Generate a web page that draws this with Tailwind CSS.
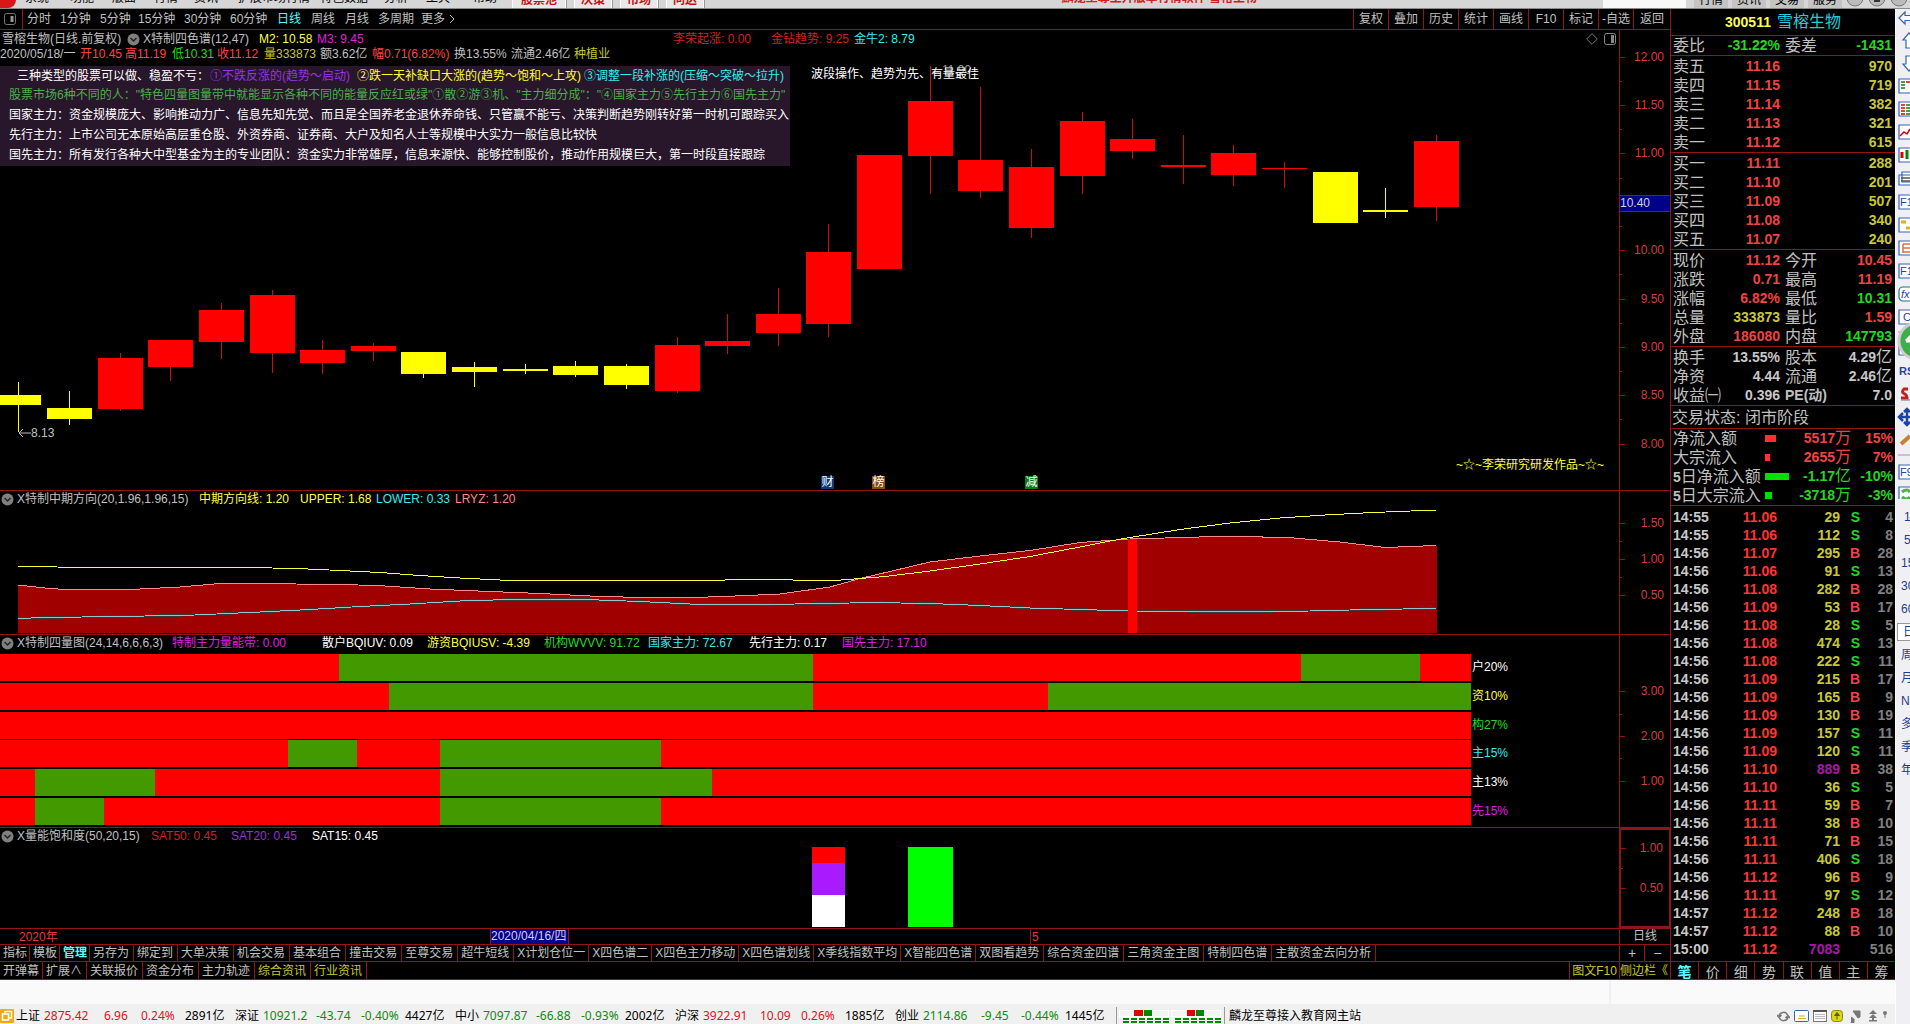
<!DOCTYPE html>
<html lang="zh-CN">
<head>
<meta charset="utf-8">
<title>雪榕生物 300511</title>
<script src="https://cdn.jsdelivr.net/npm/@tailwindcss/browser@4"></script>
</head>
<body class="flex min-h-screen flex-col overflow-x-hidden bg-[#f0f0f0] font-['Liberation_Sans','Noto_Sans_CJK_SC',sans-serif] text-xs leading-4 text-[#c0c0c0]">

<!-- window title strip -->
<header class="relative flex h-[9px] items-end overflow-hidden border-b border-[#8a8a8a] bg-[#d6d6d6] text-black">
  <span class="h-2 w-4 shrink-0 rounded-br-lg bg-[#d81818]"></span>
  <nav class="flex h-4 shrink-0 items-start leading-[13px]">
    <a href="#" class="ml-[9px] w-[45px]">系统</a><a href="#" class="w-[42px]">功能</a><a href="#" class="w-[42px]">版面</a><a href="#" class="w-[40px]">行情</a><a href="#" class="w-[44px]">资讯</a><a href="#" class="w-[82px]">扩展市场行情</a><a href="#" class="w-[64px]">特色数据</a><a href="#" class="w-[42px]">分析</a><a href="#" class="w-[47px]">工具</a><a href="#" class="w-[39px]">帮助</a>
  </nav>
  <div class="flex h-4 shrink-0 gap-2 font-bold leading-[13px] text-[#c81010]">
    <button class="w-[54px] border-x border-white bg-[#e8e8e8] shadow-[1px_0_0_#999]">股票池</button>
    <button class="w-[38px] border-x border-white bg-[#e8e8e8] shadow-[1px_0_0_#999]">决策</button>
    <button class="w-[38px] border-x border-white bg-[#e8e8e8] shadow-[1px_0_0_#999]">市场</button>
    <button class="w-[38px] border-x border-white bg-[#e8e8e8] shadow-[1px_0_0_#999]">问达</button>
  </div>
  <p class="ml-auto h-4 font-bold leading-[13px] text-[#d02020]">麟龙至尊主升版本行情软件 雪榕生物</p>
  <span class="ml-[346px] h-2 w-[83px] shrink-0 bg-[#f8f8f8]"></span>
  <div class="ml-2 flex h-4 shrink-0 gap-1 leading-[13px]">
    <button class="w-[34px] bg-[#c4c4c4]">行情</button><button class="w-[34px] bg-[#c4c4c4]">资讯</button><button class="w-[34px] bg-[#c4c4c4]">交易</button><button class="w-[34px] bg-[#c4c4c4]">服务</button>
  </div>
  <svg class="ml-1 h-2 w-[64px] shrink-0" viewBox="0 0 64 8" fill="#bbb" stroke="#777"><circle cx="9" cy="-2" r="8"/><circle cx="31" cy="-2" r="8"/><circle cx="53" cy="-2" r="8"/><path d="M28 1h6" stroke="#333" stroke-width="2"/></svg>
</header>

<div class="flex flex-1">
<div class="flex min-w-0 flex-1 flex-col">
<main class="flex bg-black">

<!-- chart column -->
<section class="min-w-0 flex-1">
  <!-- period toolbar -->
  <div class="flex h-[21px] items-center border-b border-[#931414] whitespace-nowrap">
    <svg class="ml-1 h-3 w-3" viewBox="0 0 12 12" fill="none" stroke="#777"><rect x=".5" y=".5" width="11" height="11" rx="2"/><path d="M8 3v6" stroke="#999" stroke-width="3"/></svg>
    <div class="ml-[6px] h-5 border-l border-[#931414]"></div>
    <nav class="ml-1 flex">
      <button class="w-[33px] text-left">分时</button><button class="w-10 text-left">1分钟</button><button class="w-[38px] text-left">5分钟</button><button class="w-[46px] text-left">15分钟</button><button class="w-[46px] text-left">30分钟</button><button class="w-[47px] text-left">60分钟</button><button class="w-[34px] text-left text-[#5ff]">日线</button><button class="w-[34px] text-left">周线</button><button class="w-[33px] text-left">月线</button><button class="w-[43px] text-left">多周期</button><button class="flex items-center gap-1">更多<svg class="h-2 w-[6px]" viewBox="0 0 6 8" fill="none" stroke="#c0c0c0"><path d="M1 0l4 4-4 4"/></svg></button>
    </nav>
    <div id="tools" class="ml-auto flex h-5"></div>
  </div>

  <!-- candlestick chart -->
  <div class="flex h-[461px] border-b border-[#931414]">
    <div class="relative min-w-0 flex-1 overflow-hidden">
      <svg id="candles" class="absolute inset-0 h-full w-full" viewBox="0 0 1619 460" preserveAspectRatio="none" shape-rendering="crispEdges"></svg>
      <div class="relative whitespace-nowrap">
        <div class="flex h-[18px] items-center pl-[2px]">
          <span class="w-[125px]">雪榕生物(日线.前复权)</span>
          <svg class="mr-[3px] h-[13px] w-[13px]" viewBox="0 0 13 13"><circle cx="6.500" cy="6.500" r="6" fill="#808080"/><path d="M3.500 5l3 3 3-3" fill="none" stroke="#222" stroke-width="1.500"/></svg>
          <span class="w-[116px]">X特制四色谱(12,47)</span>
          <span class="w-[58px] text-[#ff4]">M2: 10.58</span><span class="w-[356px] text-[#e020e0]">M3: 9.45</span>
          <span class="w-[98px] text-[#d02020]">李荣起涨: 0.00</span><span class="w-[83px] text-[#d02020]">金钻趋势: 9.25</span><span class="text-[#3ee]">金牛2: 8.79</span>
          <svg class="ml-auto mr-[6px] h-3 w-3" viewBox="0 0 12 12" fill="none" stroke="#777"><path d="M6 .7L11.300 6 6 11.300.7 6z"/></svg>
          <svg class="mr-[3px] h-3 w-3" viewBox="0 0 12 12" fill="none" stroke="#888"><rect x=".5" y=".5" width="11" height="11" rx="2"/><path d="M8.500 2v8" stroke-width="3"/></svg>
        </div>
        <div class="flex h-3 items-center leading-3">
          <span class="w-20">2020/05/18/一</span><span class="w-[45px] text-[#f44]">开10.45</span><span class="w-[47px] text-[#f44]">高11.19</span><span class="w-[45px] text-[#2d2]">低10.31</span><span class="w-[47px] text-[#f44]">收11.12</span><span class="w-14 text-[#c8c832]">量333873</span><span class="w-[52px]">额3.62亿</span><span class="w-[82px] text-[#f44]">幅0.71(6.82%)</span><span class="w-[57px]">换13.55%</span><span class="w-[63px]">流通2.46亿</span><span class="text-[#c8c832]">种植业</span>
        </div>
      </div>
      <div class="absolute left-0 top-9 flex h-[100px] w-[790px] flex-col bg-[#28162a] pl-[9px] leading-[20px] whitespace-nowrap text-white">
        <p class="flex h-[19px] items-center pl-2"><span class="w-[193px]">三种类型的股票可以做、稳盈不亏：</span><span class="w-[147px] text-[#9a32e8]">①不跌反涨的(趋势～启动)</span><span class="w-[227px] text-[#ff3]">②跌一天补缺口大涨的(趋势～饱和～上攻)</span><span class="text-[#3ee]">③调整一段补涨的(压缩～突破～拉升)</span></p>
        <p class="text-[#4cb04c]">股票市场6种不同的人："特色四量图量带中就能显示各种不同的能量反应红或绿"①散②游③机、"主力细分成"："④国家主力⑤先行主力⑥国先主力"</p>
        <p>国家主力：资金规模庞大、影响推动力广、信息先知先觉、而且是全国养老金退休养命钱、只管赢不能亏、决策判断趋势刚转好第一时机可跟踪买入</p>
        <p>先行主力：上市公司无本原始高层重仓股、外资券商、证券商、大户及知名人士等规模中大实力一般信息比较快</p>
        <p>国先主力：所有发行各种大中型基金为主的专业团队：资金实力非常雄厚，信息来源快、能够控制股价，推动作用规模巨大，第一时段直接跟踪</p>
      </div>
      <span class="absolute left-[930px] top-8 text-[#999]">←11.90</span>
      <span class="absolute left-[811px] top-9 whitespace-nowrap text-white">波段操作、趋势为先、有量最佳</span>
      <span class="absolute left-[19px] top-[395px] flex items-center"><svg class="h-2 w-3" viewBox="0 0 12 8" fill="none" stroke="#c0c0c0"><path d="M12 4H0M4 0L0 4l4 4"/></svg>8.13</span>
      <span class="absolute left-[821px] top-[446px] h-[13px] w-[13px] bg-[#0a3a78] text-center leading-[13px] text-white">财</span>
      <span class="absolute left-[872px] top-[446px] h-[13px] w-[13px] bg-[#8a4a10] text-center leading-[13px] text-white">榜</span>
      <span class="absolute left-[1025px] top-[446px] h-[13px] w-[13px] bg-[#0a7a14] text-center leading-[13px] text-white">减</span>
      <span class="absolute right-[15px] top-[427px] whitespace-nowrap text-[#ff3]">~☆~李荣研究研发作品~☆~</span>
    </div>
    <div class="relative w-[51px] border-l border-[#931414]" data-axis="27:12.00,75:11.50,123:11.00,172:,220:10.00,269:9.50,317:9.00,365:8.50,414:8.00" data-minor="51,99,148,196,244,293,341,389">
      <span class="absolute inset-x-0 top-[165px] z-10 h-[17px] border-y border-[#931414] bg-[#000088] leading-[15px] text-[#d0d0e8]">10.40</span>
    </div>
  </div>

  <!-- mid-term direction -->
  <div class="flex h-[144px] border-b border-[#931414]">
    <div class="relative min-w-0 flex-1 overflow-hidden">
      <svg class="absolute inset-0 h-full w-full" viewBox="0 0 1619 143" preserveAspectRatio="none" fill="none" shape-rendering="crispEdges">
        <path fill="#a00000" d="M18 142V94L45 97 65 98.500H130L180 96 220 92.500H247L345 93.500 385 95 430 98 490 100.500 540 102.500 590 105 640 106.500 700 106.300 740 104.800 780 103 830 96 860 87.500 890 80.500 930 71 980 65 1030 59.500 1080 51.500 1130 48 1210 45.700H1250L1290 46.700 1340 51 1385 56.500 1437 54.500V142z"/>
        <path stroke="#f88" d="M18 94L45 97 65 98.500H130L180 96 220 92.500H247L345 93.500 385 95 430 98 490 100.500 540 102.500 590 105 640 106.500 700 106.300 740 104.800 780 103 830 96 860 87.500 890 80.500 930 71 980 65 1030 59.500 1080 51.500 1130 48 1210 45.700H1250L1290 46.700 1340 51 1385 56.500 1436 54.500"/>
        <path stroke="#303c3c" stroke-width="2.500" d="M18 127.500L45 126.500 120 125.500 195 124 260 121 310 118.500 360 115.500 410 113 460 110 510 108.500H585L640 110.500 700 113.500H760L830 112.500 870 111.500 930 112.500 980 114.500 1030 117 1080 118.500 1130 120 1240 120.500 1310 120 1370 118.500 1436 117.500"/>
        <path stroke="#8cc8cc" d="M18 127.500L45 126.500 120 125.500 195 124 260 121 310 118.500 360 115.500 410 113 460 110 510 108.500H585L640 110.500 700 113.500H760L830 112.500 870 111.500 930 112.500 980 114.500 1030 117 1080 118.500 1130 120 1240 120.500 1310 120 1370 118.500 1436 117.500"/>
        <path stroke="#ff4" d="M18 75.500L95 76.500H247L297 77.500 340 79.500 380 81.500 420 84.500 460 87 510 89.500H700L750 88.500 835 89.500 860 87.500 885 85.500 930 80 980 73 1030 65.500 1080 56 1110 50 1130 46.500 1180 38.500 1230 32 1280 27 1325 24 1373 21.500 1436 19"/>
        <path fill="#f00" d="M1128 48h9v94h-9z"/>
      </svg>
      <div class="relative flex h-4 items-center whitespace-nowrap">
        <svg class="mx-[1px] mr-[3px] h-[13px] w-[13px]" viewBox="0 0 13 13"><circle cx="6.500" cy="6.500" r="6" fill="#808080"/><path d="M3.500 5l3 3 3-3" fill="none" stroke="#222" stroke-width="1.500"/></svg>
        <span class="w-[182px]">X特制中期方向(20,1.96,1.96,15)</span><span class="w-[101px] text-[#ff4]">中期方向线: 1.20</span><span class="w-[76px] text-[#ff4]">UPPER: 1.68</span><span class="w-[79px] text-[#3ee]">LOWER: 0.33</span><span class="text-[#f88]">LRYZ: 1.20</span>
      </div>
    </div>
    <div class="relative w-[51px] border-l border-[#931414]" data-axis="32:1.50,68:1.00,104:0.50" data-minor="50,86"></div>
  </div>

  <!-- four-volume bands -->
  <div class="flex h-[193px] border-b border-[#931414]">
    <div class="min-w-0 flex-1 overflow-hidden">
      <div class="flex h-[19px] items-start whitespace-nowrap">
        <svg class="mx-[1px] mr-[3px] mt-[2px] h-[13px] w-[13px]" viewBox="0 0 13 13"><circle cx="6.500" cy="6.500" r="6" fill="#808080"/><path d="M3.500 5l3 3 3-3" fill="none" stroke="#222" stroke-width="1.500"/></svg>
        <span class="w-[155px]">X特制四量图(24,14,6,6,6,3)</span><span class="w-[150px] text-[#e020e0]">特制主力量能带: 0.00</span><span class="w-[105px] text-white">散户BQIUV: 0.09</span><span class="w-[117px] text-[#ff4]">游资BQIUSV: -4.39</span><span class="w-[104px] text-[#2d2]">机构WVVV: 91.72</span><span class="w-[101px] text-[#3ee]">国家主力: 72.67</span><span class="w-[93px] text-white">先行主力: 0.17</span><span class="text-[#e020e0]">国先主力: 17.10</span>
      </div>
      <div id="bands" class="flex h-[171px] flex-col justify-between"></div>
    </div>
    <div class="relative w-[51px] border-l border-[#931414]" data-axis="56:3.00,101:2.00,146:1.00" data-minor="79,123"></div>
  </div>

  <!-- saturation -->
  <div class="flex h-[101px] border-b border-[#931414]">
    <div class="relative min-w-0 flex-1 overflow-hidden">
      <svg class="absolute inset-0 h-full w-full" viewBox="0 0 1619 100" preserveAspectRatio="none"><path fill="#f00" d="M812 19h33v17h-33z"/><path fill="#aa1aff" d="M812 35h33v32h-33z"/><path fill="#fff" d="M812 67h33v32h-33z"/><path fill="#0f0" d="M908 19h45v80h-45z"/></svg>
      <div class="relative flex h-4 items-center whitespace-nowrap">
        <svg class="mx-[1px] mr-[3px] h-[13px] w-[13px]" viewBox="0 0 13 13"><circle cx="6.500" cy="6.500" r="6" fill="#808080"/><path d="M3.500 5l3 3 3-3" fill="none" stroke="#222" stroke-width="1.500"/></svg>
        <span class="w-[134px]">X量能饱和度(50,20,15)</span><span class="w-20 text-[#d02020]">SAT50: 0.45</span><span class="w-[81px] text-[#9a32d8]">SAT20: 0.45</span><span class="text-white">SAT15: 0.45</span>
      </div>
    </div>
    <div class="relative w-[51px] border-2 border-r border-[#931414]" data-axis="18:1.00,58:0.50" data-minor="38"></div>
  </div>

  <!-- time axis -->
  <div class="flex h-4 border-b border-[#931414]">
    <div class="relative flex-1 text-[#e03c3c]">
      <span class="absolute left-[19px] top-0">2020年</span>
      <span class="absolute left-[490px] top-0 h-[15px] w-[79px] border-x border-[#931414] bg-[#000088] leading-[15px] whitespace-nowrap text-[#d0d0e8]">2020/04/16/四</span>
      <span class="absolute left-[1030px] top-0 h-[15px] border-l border-[#931414] pl-px">5</span>
    </div>
    <button class="w-[51px] border-l border-[#931414] leading-[15px]">日线</button>
  </div>
  <!-- indicator tabs -->
  <div class="flex h-[17px] border-b border-[#931414] whitespace-nowrap">
    <div id="tabs1" class="flex min-w-0 flex-1 overflow-hidden"></div>
    <div class="flex w-[51px] border-l border-[#931414]"><button class="w-[25px] border-r border-[#931414] text-sm leading-4">+</button><button class="flex-1 text-sm leading-4">−</button></div>
  </div>
  <div class="flex h-[18px] border-b border-[#931414] whitespace-nowrap">
    <div id="tabs2" class="flex flex-1"></div>
    <button class="w-[50px] border-l border-[#931414] text-[#c8c832]">图文F10</button>
    <button class="w-[51px] border-l border-[#931414] text-left text-[#c8c832]">侧边栏《</button>
  </div>
</section>

<!-- quote panel -->
<aside class="flex w-[225px] shrink-0 flex-col border-l border-[#931414] text-sm">
  <h1 class="flex h-[27px] items-center justify-center gap-[6px] border-b border-[#931414] font-bold text-[#ff4]">300511 <span class="text-base font-normal text-[#2cd]">雪榕生物</span></h1>
  <div id="quotes"></div>
  <div id="ticks" class="flex-1 pt-[2px]"></div>
  <div id="qtabs" class="flex h-[19px] border-y border-[#931414]"></div>
</aside>
</main>

<div class="flex h-6 bg-[#fafafa]"><span class="flex-1"></span><span class="w-[286px] border-l-2 border-[#f0f0f0]"></span></div>

<!-- index status bar -->
<footer class="flex h-5 items-center overflow-hidden bg-[#f0f0f0] pt-1 font-['Noto_Sans','Noto_Sans_CJK_SC',sans-serif] whitespace-nowrap text-black">
  <svg class="mr-[2px] h-[14px] w-[14px] shrink-0" viewBox="0 0 14 14"><rect width="14" height="14" rx="1" fill="#f0a818"/><g fill="none" stroke="#fff" stroke-width="1.500"><rect x="2.500" y="5" width="6" height="6"/><path d="M5 4.500V2.500h6.500V9H9"/></g></svg>
  <div id="indices" class="flex shrink-0"></div>
  <svg class="h-[18px] w-[110px] shrink-0" viewBox="0 0 110 18" shape-rendering="crispEdges"><path d="M1.500 0v18M109.500 0v18" stroke="#999"/><g fill="#f4f4f4" stroke="#fff"><path d="M4.500 3.500h49v6h-49zM56.500 3.500h49v6h-49z"/></g><path fill="#e00000" d="M19 3h9v6h-9zM72 3h8v6h-8z"/><path fill="#080" d="M29 3h8v6h-8zM81 3h8v6h-8z"/><path stroke="#080" stroke-width="2" stroke-dasharray="6 2" d="M8 12h46M8 15h46M60 12h46M60 15h46"/></svg>
  <span class="ml-1">麟龙至尊接入教育网主站</span>
  <div class="ml-auto mr-[6px] flex items-center gap-1">
    <svg class="h-[13px] w-[13px]" viewBox="0 0 13 13" fill="none" stroke="#777" stroke-width="1.500"><path d="M2 6a4.500 4.500 0 0 1 8.500-1M11 7a4.500 4.500 0 0 1-8.500 1M0 5l2 2.500L4.500 5M8.500 8L11 5.500 13 8"/></svg>
    <svg class="h-3 w-[15px]" viewBox="0 0 15 12"><rect x=".5" y=".5" width="14" height="11" rx="1" fill="#fff" stroke="#3a62a8"/><path d="M5 6h6M4 8.500h8" stroke="#d8b020"/></svg>
    <svg class="h-3 w-[14px]" viewBox="0 0 14 12"><rect x=".5" y=".5" width="13" height="11" fill="#fafafa" stroke="#777"/><path d="M0 1h14" stroke="#555" stroke-width="2"/><path d="M2 4.500h10M2 6.500h10M2 8.500h10" stroke="#bbb"/></svg>
    <svg class="h-3 w-3" viewBox="0 0 12 12"><rect x=".5" y=".5" width="11" height="11" rx="3" fill="#d8d818" stroke="#888810"/><path d="M6 2.500L3.500 5.500h5zM6 5v4.500" stroke="#665c00" fill="#665c00"/></svg>
    <svg class="ml-[3px] h-[13px] w-3" viewBox="0 0 12 13" fill="#777" stroke="#777"><path d="M3 1l7 0 0 6-2 1zM4 9L1 12.500M1 7l3 2v3.500H1"/></svg>
    <svg class="ml-[3px] h-3 w-2" viewBox="0 0 8 12" fill="#777"><path d="M4 0l4 4H0zM4 4l4 4H0zM3 7h2v3H3zM0 10h8v1.500H0z"/></svg>
    <svg class="h-3 w-2" viewBox="0 0 8 12" fill="#777"><circle cx="4" cy="3" r="2"/><path d="M3.500 3h1v5h-1z"/></svg>
  </div>
</footer>
</div>

<!-- clipped tool rail -->
<nav class="relative w-[15px] shrink-0 overflow-hidden border-l border-white bg-[#f0f0f4]">
  <svg class="absolute left-0 top-0 h-[490px] w-[30px]" viewBox="1 9 30 490" fill="none" stroke="#3464b4" stroke-width="1.200">
    <path fill="#fff" d="M4 18l6-6v3.500h8v5h-8V24zM8 40l6-7 6 7h-3v8h-6v-8zM8 64l6 7 6-7h-3v-8h-6v8z"/>
    <g fill="#fff"><path d="M4 79h18v14H4zM4 102h18v14H4zM4 125h18v14H4zM4 148h18v14H4zM7 172h15v10H7zM4 175h15v10H4zM4 195h18v14H4zM4 218h18v14H4zM4 241h18v14H4zM4 264h18v14H4zM4 310h18v14H4zM4 341h18v14H4zM4 465h18v14H4zM4 487h18v14H4z"/><rect x="4" y="287" width="18" height="14" rx="4" stroke="#20708c"/></g>
    <g stroke-width="1.500"><path stroke="#080" d="M6 82h4M6 85h4M6 88h4M11 105h4M11 108h4M11 111h4M11 114h4"/><path stroke="#d00" d="M11 82h4M6 105h4M6 108h4M6 111h4M6 114h4M5 136l4-4 3 2 3-5M7 152v6"/><path stroke="#080" stroke-width="3" d="M12 150v9"/><path stroke="#d00" stroke-width="3" d="M7 152v6"/><path stroke="#555" d="M6 178h10M6 181h10"/><path stroke="#e8a820" stroke-width="3" d="M6 222h5M11 228h5"/><path stroke="#e07040" d="M8 244h8M8 248h8M8 252h8M8 244v9"/></g>
    <path stroke="#c02020" stroke-width="3" d="M13 389h-4q-3 3 0 4.500t3 4.500H6"/><path stroke="#888" d="M6 400h10"/>
    <path stroke="#1c44a4" stroke-width="2.500" d="M5 417h14M12 410v14M8 413l-4 4 4 4M9 412l3-3 3 3M9 422l3 3 3-3"/>
    <path stroke="#c88030" stroke-width="4" d="M6 444l9-8"/><path stroke="#999" d="M3 455h20M3 332h20"/>
    <path stroke="#50b050" stroke-width="3" d="M7 492q5-4 8 0M7 497q5 4 8 0"/>
    <circle cx="22" cy="341" r="18" fill="#3cb048" stroke="#ccc" stroke-width="3"/><path stroke="#fff" stroke-width="3" d="M11 341l5-5M11 341h8"/>
    <g fill="#1c44a4" stroke="none" font-size="11"><text x="5" y="206">F10</text><text x="5" y="275">F1</text><text x="6" y="298" font-style="italic">fx</text><text x="8" y="321">C</text><text x="5" y="476">F9</text><text x="4" y="375" font-weight="bold">RS</text></g>
  </svg>
  <div class="mt-[500px] flex flex-col items-start gap-[7px] pl-[5px] text-[#1c3c8c]">
    <button class="pl-[3px]">1</button><button class="pl-[3px]">5</button><button>15</button><button>30</button><button>60</button><button class="-my-px -ml-1 border border-r-0 border-[#999] bg-white pl-[5px]">日</button><button>周</button><button>月</button><button>N</button><button>多</button><button>季</button><button>年</button>
  </div>
</nav>
</div>

<script>
const $ = id => document.getElementById(id);

// candles: centre, body top, body bottom, wick top, wick bottom, colour
const R = '#f00', Y = '#ff0';
const candles = [
 [18,395,405,382,432,Y],[69,408,419,391,425,Y],[120,358,409,353,411,R],[170,340,367,340,381,R],[221,295,353,290,373,R,1],[272,295,353,290,373,R],
 [322,350,363,340,374,R],[373,346,351,343,361,R],[423,352,374,352,378,Y],[474,367,372,362,387,Y],[525,369,371,364,374,Y],[575,366,375,361,377,Y],
 [626,366,385,364,389,Y],[677,345,391,337,393,R],[727,341,346,314,354,R],[778,314,333,288,346,R],[828,252,324,224,337,R],[879,155,269,155,269,R],
 [930,101,156,66,194,R],[980,160,191,87,198,R],[1031,167,228,149,238,R],[1082,121,176,112,194,R],[1132,139,151,119,159,R],[1183,165,167,135,184,R],
 [1233,153,175,145,186,R],[1284,168,169,162,188,R],[1335,172,223,172,223,Y],[1385,210,212,188,218,Y],[1436,141,207,135,221,R]];
candles[4] = [221,310,342,303,359,R];
$('candles').innerHTML = candles.map(([x,a,b,h,l,c]) =>
 `<rect x="${x}" y="${h-30}" width="1" height="${l-h}" fill="${c===R?'#c81010':c}"/><rect x="${x-22}" y="${a-30}" width="45" height="${b-a}" fill="${c}"/>`).join('');

// price scales
document.querySelectorAll('[data-axis]').forEach(el => {
  let h = '';
  el.dataset.axis.split(',').forEach(p => { const [y,t] = p.split(':');
    h += `<i class="absolute left-0 h-px w-[5px] bg-[#931414]" style="top:${y}px"></i><span class="absolute right-[6px] text-[#d83c3c]" style="top:${y-8}px">${t}</span>`; });
  el.dataset.minor.split(',').forEach(y => h += `<i class="absolute left-0 h-px w-[2px] bg-[#931414]" style="top:${y}px"></i>`);
  el.insertAdjacentHTML('beforeend', h);
});

// bands: alternating red / green end points
[[[339,813,1301,1420,1471],'户20%','text-white'],[[389,813,1048,1471],'资10%','text-[#ff4]'],[[1471],'构27%','text-[#2d2]'],
 [[288,357,440,661,1471],'主15%','text-[#3ee]'],[[35,155,440,712,1471],'主13%','text-white'],[[35,104,440,661,1471],'先15%','text-[#e020e0]']].forEach(([e,t,c]) => {
  let p = 0, h = '';
  e.forEach((x,i) => { h += `<div class="${i%2?'bg-[#429900]':'bg-[#f00]'}" style="width:${(x-p)/16.19}%"></div>`; p = x; });
  $('bands').insertAdjacentHTML('beforeend', `<div class="flex h-[27px] shrink-0">${h}<span class="pl-px leading-[27px] ${c}">${t}</span></div>`);
});

$('tools').innerHTML = '复权 叠加 历史 统计 画线 F10 标记 -自选 返回'.split(' ').map((t,i) => `<button class="${i<8?'w-[35px]':'w-[37px]'} border-l border-[#931414]">${t}</button>`).join('');
$('tabs1').innerHTML = '指标 模板 管理 另存为 绑定到 大单决策 机会交易 基本组合 撞击交易 至尊交易 超牛短线 X计划仓位一 X四色谱二 X四色主力移动 X四色谱划线 X季线指数平均 X智能四色谱 双图看趋势 综合资金四谱 三角资金主图 特制四色谱 主散资金去向分析'.split(' ').map((t,i) =>
 `<button class="shrink-0 border-r border-[#931414] pl-[3px] ${i<3?'pr-[2px]':t[0]==='X'?'pr-[3px]':'pr-1'} ${i===2?'font-bold text-[#5ff]':''}">${t}</button>`).join('');
$('tabs2').innerHTML = '开弹幕 扩展∧ 关联报价 资金分布 主力轨迹 综合资讯 行业资讯'.split(' ').map((t,i) =>
 `<button class="border-r border-[#931414] pl-[3px] ${i?'pr-1':'pr-[3px]'} ${i>4?'text-[#c8c832]':''}">${t}</button>`).join('');
$('qtabs').innerHTML = [...'笔价细势联值主筹'].map((t,i) => `<button class="flex-1 ${i?'border-l border-[#931414]':'font-bold text-[#5ff]'}">${t}</button>`).join('');

// quote tables
const C = {r:'text-[#f04444]',g:'text-[#22d822]',y:'text-[#c8c832]',w:'text-[#c8c8c8]',k:'text-[#808080]',p:'text-[#a818a8]'};
const num = t => t.replace(/([亿万])/g,'<span class="text-base leading-none font-normal">$1</span>');
const quad = rows => `<table class="w-full table-fixed border-b border-[#931414]"><tbody>${rows.map(([a,b,bc,c,d,dc]) =>
 `<tr class="h-[19px] leading-[19px]"><th scope="row" class="w-[50px] whitespace-nowrap p-0 pl-[2px] text-left text-base leading-[19px] font-normal">${a}</th><td class="w-[59px] p-0 text-right font-bold ${C[bc]}">${b}</td><td class="w-[50px] p-0 pl-[5px] text-left whitespace-nowrap leading-[19px] ${c[0]==='P'?'font-bold':'text-base'}">${c}</td><td class="p-0 pr-[3px] text-right font-bold whitespace-nowrap leading-[19px] ${C[dc]}">${num(d)}</td></tr>`).join('')}</tbody></table>`;
const book = s => quad(s.split(' ').map(r => { const [a,b,c] = r.split(','); return [a,b,'r','',c,'y']; }));
$('quotes').innerHTML =
 quad([['委比','-31.22%','g','委差','-1431','g']]) +
 `<div class="py-px">${book('卖五,11.16,970 卖四,11.15,719 卖三,11.14,382 卖二,11.13,321 卖一,11.12,615')}</div>` +
 book('买一,11.11,288 买二,11.10,201 买三,11.09,507 买四,11.08,340 买五,11.07,240') +
 `<div class="pt-px">${quad([['现价','11.12','r','今开','10.45','r'],['涨跌','0.71','r','最高','11.19','r'],['涨幅','6.82%','r','最低','10.31','g'],['总量','333873','y','量比','1.59','r'],['外盘','186080','r','内盘','147793','g']])}</div>` +
 `<div class="pt-px">${quad([['换手','13.55%','w','股本','4.29亿','w'],['净资','4.44','w','流通','2.46亿','w'],['收益㈠','0.396','w','PE(动)','7.0','w']])}</div>` +
 `<p class="h-[23px] border-b border-[#931414] pl-px text-base leading-[23px]">交易状态: 闭市阶段</p>` +
 `<table class="w-full table-fixed border-b border-[#931414]"><tbody>${[['净流入额',11,'5517万','15%',1],['大宗流入',5,'2655万','7%',1],['5日净流入额',24,'-1.17亿','-10%',0],['5日大宗流入',7,'-3718万','-3%',0]].map(([a,w,b,c,u]) =>
 `<tr class="h-[19px]"><th scope="row" class="w-[94px] p-0 pl-[2px] text-left text-base leading-[19px] font-normal whitespace-nowrap">${a.replace('5','<b class="text-sm leading-none">5</b>')}</th><td class="w-6 p-0"><div class="h-[7px] ${u?'bg-[#ff3030]':'bg-[#00e000]'}" style="width:${w}px"></div></td><td class="w-[62px] p-0 text-right font-bold whitespace-nowrap leading-[19px] ${u?C.r:C.g}">${num(b)}</td><td class="p-0 pr-[2px] text-right font-bold leading-[19px] ${u?C.r:C.g}">${c}</td></tr>`).join('')}</tbody></table>`;

const ticks = '14:55,11.06,29,S,4 14:55,11.06,112,S,8 14:56,11.07,295,B,28 14:56,11.06,91,S,13 14:56,11.08,282,B,28 14:56,11.09,53,B,17 14:56,11.08,28,S,5 14:56,11.08,474,S,13 14:56,11.08,222,S,11 14:56,11.09,215,B,17 14:56,11.09,165,B,9 14:56,11.09,130,B,19 14:56,11.09,157,S,11 14:56,11.09,120,S,11 14:56,11.10,889,B,38 14:56,11.10,36,S,5 14:56,11.11,59,B,7 14:56,11.11,38,B,10 14:56,11.11,71,B,15 14:56,11.11,406,S,18 14:56,11.12,96,B,9 14:56,11.11,97,S,12 14:57,11.12,248,B,18 14:57,11.12,88,B,10 15:00,11.12,7083,,516';
$('ticks').innerHTML = `<table class="w-full table-fixed font-bold"><tbody>${ticks.split(' ').map(r => { const [t,p,v,s,n] = r.split(',');
 return `<tr class="h-[18px] leading-[18px]"><td class="w-[52px] p-0 pl-[2px] ${C.w}">${t}</td><td class="w-[54px] p-0 text-right text-[#ff3434]">${p}</td><td class="w-[63px] p-0 text-right ${+v>800?C.p:C.y}">${v}</td><td class="w-[20px] p-0 text-right ${s==='S'?C.g:C.r}">${s}</td><td class="p-0 pr-[2px] text-right ${C.k}">${n}</td></tr>`; }).join('')}</tbody></table>`;

// index quotes, columns sized by the length of the change value
$('indices').innerHTML = '上证,2875.42,6.96,0.24%,2891亿 深证,10921.2,-43.74,-0.40%,4427亿 中小,7097.87,-66.88,-0.93%,2002亿 沪深,3922.91,10.09,0.26%,1885亿 创业,2114.86,-9.45,-0.44%,1445亿'.split(' ').map(r => { const a = r.split(','), up = a[2][0] !== '-', long = a[2].length > (up ? 4 : 5);
 const w = [28, up ? (long ? 57 : 60) : long ? 53 : 58, up ? (long ? 41 : 37) : long ? 45 : 40, 44, 50];
 return a.map((t,i) => `<span class="${i && i<4 ? (up?'text-[#e01020]':'text-[#108a10]') : ''}" style="width:${w[i]}px">${t}</span>`).join(''); }).join('');
</script>
</body>
</html>
